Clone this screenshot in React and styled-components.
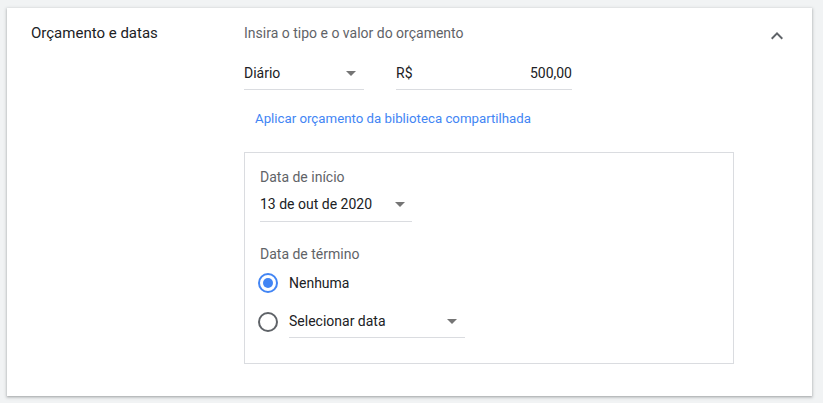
import React from "react";
import styled, { createGlobalStyle } from "styled-components";

const Global = createGlobalStyle`
  html, body { margin: 0; padding: 0; background: #f1f3f4; }
  body { font-family: Roboto, "Noto Sans", Arial, sans-serif; color: #202124; }
  * { box-sizing: border-box; }
`;

const Page = styled.div`
  padding: 8px 11px 7px 7px;
`;

const Card = styled.section`
  background: #fff;
  box-shadow: 0 1px 2px rgba(60, 64, 67, 0.3), 0 1px 3px 1px rgba(60, 64, 67, 0.15);
  display: flex;
  padding: 15px 0 32px 24px;
  min-height: 388px;
`;

const Label = styled.h2`
  margin: 0;
  width: 213px;
  flex: none;
  font-size: 15px;
  line-height: 20px;
  font-weight: 400;
  color: #202124;
`;

const Content = styled.div`
  flex: 1;
  display: flex;
  flex-direction: column;
  align-items: flex-start;
`;

const Subtitle = styled.div`
  font-size: 14px;
  line-height: 20px;
  color: #5f6368;
`;

const FieldRow = styled.div`
  display: flex;
  gap: 32px;
  margin-top: 14px;
`;

const Field = styled.div`
  display: flex;
  align-items: center;
  justify-content: space-between;
  width: ${(p) => p.$w}px;
  padding: ${(p) => p.$pt ?? 6}px 0 ${(p) => p.$pb ?? 6}px;
  border-bottom: 1px solid #dadce0;
  font-size: 14px;
  line-height: 20px;
  color: #202124;
`;

const Arrow = styled.span`
  width: 0;
  height: 0;
  border-left: 5px solid transparent;
  border-right: 5px solid transparent;
  border-top: 5px solid #757575;
  margin-right: ${(p) => p.$mr ?? 8}px;
`;

const Link = styled.a`
  margin: 19px 0 0 11px;
  font-size: 13.25px;
  line-height: 20px;
  color: #4285f4;
  text-decoration: none;
  cursor: pointer;
`;

const Box = styled.div`
  margin-top: 23px;
  width: 490px;
  border: 1px solid #dadce0;
  padding: 14px 15px 25px;
  display: flex;
  flex-direction: column;
  align-items: flex-start;
`;

const BoxLabel = styled.div`
  font-size: 14px;
  line-height: 20px;
  color: #5f6368;
  margin-top: ${(p) => p.$mt ?? 0}px;
`;

const RadioRow = styled.label`
  display: flex;
  align-items: center;
  gap: 11px;
  margin-top: ${(p) => p.$mt}px;
  margin-left: -2px;
  font-size: 14px;
  line-height: 20px;
  color: #202124;
`;

const Radio = styled.span`
  width: 20px;
  height: 20px;
  border-radius: 50%;
  border: 2px solid ${(p) => (p.$on ? "#4285f4" : "#5f6368")};
  display: flex;
  align-items: center;
  justify-content: center;
  flex: none;
  &::after {
    content: "";
    width: 10px;
    height: 10px;
    border-radius: 50%;
    background: ${(p) => (p.$on ? "#4285f4" : "transparent")};
  }
`;

const Toggle = styled.button`
  flex: none;
  width: 24px;
  height: 24px;
  margin: 1px 23px 0 0;
  padding: 0;
  border: 0;
  background: transparent;
  display: flex;
  cursor: pointer;
`;

export default function App() {
  return (
    <>
      <Global />
      <Page>
        <Card>
          <Label>Orçamento e datas</Label>
          <Content>
            <Subtitle>Insira o tipo e o valor do orçamento</Subtitle>
            <FieldRow>
              <Field $w={120}>
                <span>Diário</span>
                <Arrow />
              </Field>
              <Field $w={176}>
                <span>R$</span>
                <span>500,00</span>
              </Field>
            </FieldRow>
            <Link>Aplicar orçamento da biblioteca compartilhada</Link>
            <Box>
              <BoxLabel>Data de início</BoxLabel>
              <Field $w={152} $pt={7} $pb={7}>
                <span>13 de out de 2020</span>
                <Arrow $mr={7} />
              </Field>
              <BoxLabel $mt={22}>Data de término</BoxLabel>
              <RadioRow $mt={9}>
                <Radio $on />
                <span>Nenhuma</span>
              </RadioRow>
              <RadioRow $mt={12}>
                <Radio />
                <Field $w={176}>
                  <span>Selecionar data</span>
                  <Arrow />
                </Field>
              </RadioRow>
            </Box>
          </Content>
          <Toggle aria-label="Recolher">
            <svg width="24" height="24" viewBox="0 0 24 24">
              <path d="M12 8l-6 6 1.41 1.41L12 10.83l4.59 4.58L18 14z" fill="#5f6368" />
            </svg>
          </Toggle>
        </Card>
      </Page>
    </>
  );
}
